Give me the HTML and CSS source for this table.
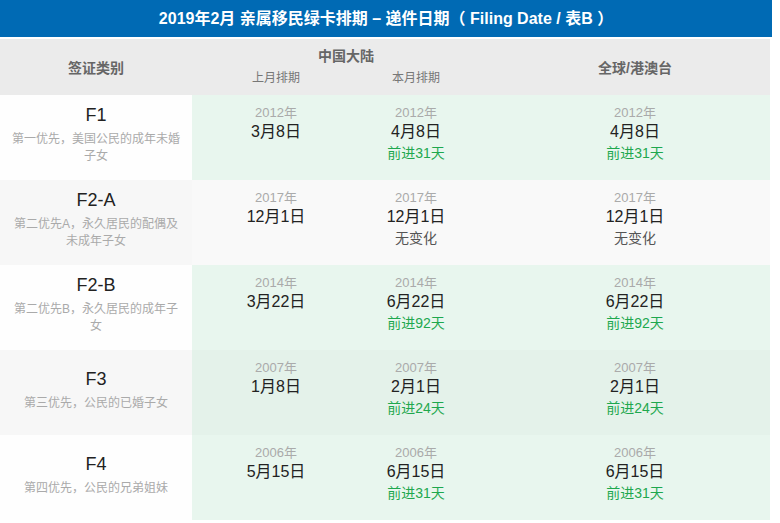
FILE: index.html
```html
<!DOCTYPE html>
<html lang="zh-CN">
<head>
<meta charset="utf-8">
<title>2019年2月 亲属移民绿卡排期</title>
<link rel="stylesheet" href="styles.css">
</head>
<body>
<div class="title">2019年2月 亲属移民绿卡排期 – 递件日期（ Filing Date / 表B ）</div>
<div class="table">
  <div class="head">
    <div class="hcell">签证类别</div>
    <div class="hgroup">
      <div class="gname">中国大陆</div>
      <div class="gsubs"><span>上月排期</span><span>本月排期</span></div>
    </div>
    <div class="hcell">全球/港澳台</div>
  </div>

  <div class="row odd changed">
    <div class="label"><div class="code">F1</div><div class="desc">第一优先，美国公民的成年未婚子女</div></div>
    <div class="cell first"><div class="yr">2012年</div><div class="dt">3月8日</div></div>
    <div class="cell second"><div class="yr">2012年</div><div class="dt">4月8日</div><div class="chg up">前进31天</div></div>
    <div class="cell"><div class="yr">2012年</div><div class="dt">4月8日</div><div class="chg up">前进31天</div></div>
  </div>

  <div class="row even">
    <div class="label"><div class="code">F2-A</div><div class="desc">第二优先A，永久居民的配偶及未成年子女</div></div>
    <div class="cell first"><div class="yr">2017年</div><div class="dt">12月1日</div></div>
    <div class="cell second"><div class="yr">2017年</div><div class="dt">12月1日</div><div class="chg">无变化</div></div>
    <div class="cell"><div class="yr">2017年</div><div class="dt">12月1日</div><div class="chg">无变化</div></div>
  </div>

  <div class="row odd changed">
    <div class="label"><div class="code">F2-B</div><div class="desc">第二优先B，永久居民的成年子女</div></div>
    <div class="cell first"><div class="yr">2014年</div><div class="dt">3月22日</div></div>
    <div class="cell second"><div class="yr">2014年</div><div class="dt">6月22日</div><div class="chg up">前进92天</div></div>
    <div class="cell"><div class="yr">2014年</div><div class="dt">6月22日</div><div class="chg up">前进92天</div></div>
  </div>

  <div class="row even changed">
    <div class="label"><div class="code">F3</div><div class="desc">第三优先，公民的已婚子女</div></div>
    <div class="cell first"><div class="yr">2007年</div><div class="dt">1月8日</div></div>
    <div class="cell second"><div class="yr">2007年</div><div class="dt">2月1日</div><div class="chg up">前进24天</div></div>
    <div class="cell"><div class="yr">2007年</div><div class="dt">2月1日</div><div class="chg up">前进24天</div></div>
  </div>

  <div class="row odd changed">
    <div class="label"><div class="code">F4</div><div class="desc">第四优先，公民的兄弟姐妹</div></div>
    <div class="cell first"><div class="yr">2006年</div><div class="dt">5月15日</div></div>
    <div class="cell second"><div class="yr">2006年</div><div class="dt">6月15日</div><div class="chg up">前进31天</div></div>
    <div class="cell"><div class="yr">2006年</div><div class="dt">6月15日</div><div class="chg up">前进31天</div></div>
  </div>
</div>
</body>
</html>
```
FILE: styles.css
```css
* { box-sizing: border-box; }
body {
  margin: 0;
  background: #ffffff;
  font-family: "Liberation Sans", "Noto Sans CJK SC", sans-serif;
}
.title {
  width: 772px;
  height: 37px;
  background: #006ab4;
  color: #ffffff;
  font-size: 16px;
  font-weight: bold;
  line-height: 37px;
  text-align: center;
  margin-bottom: 2px;
  white-space: pre;
}
.table { width: 770px; }
.head {
  display: grid;
  grid-template-columns: 192px 308px 270px;
  height: 56px;
  background: #ebebeb;
}
.hcell {
  display: flex;
  align-items: center;
  justify-content: center;
  font-size: 14px;
  font-weight: bold;
  color: #666666;
  padding-bottom: 1px;
}
.hgroup {
  padding: 7px 14px 0;
  text-align: center;
}
.gname {
  font-size: 14px;
  font-weight: bold;
  color: #666666;
  line-height: 20px;
}
.gsubs {
  display: grid;
  grid-template-columns: 1fr 1fr;
  margin-top: 3px;
  font-size: 12px;
  color: #777777;
  line-height: 18px;
}
.row {
  display: grid;
  grid-template-columns: 192px 154px 154px 270px;
  height: 85px;
  background: #f9f9f9;
}
.row.changed { background: #e8f6ee; }
.row.even.changed { background: #e4f2ea; }
.label {
  display: flex;
  flex-direction: column;
  justify-content: center;
  align-items: center;
  text-align: center;
  padding: 0 11px 6px;
  background: #fefefe;
}
.row.even .label { background: #f7f7f7; }
.code {
  font-size: 18px;
  line-height: 22px;
  color: #222222;
  margin-bottom: 5px;
}
.desc {
  font-size: 12px;
  line-height: 17px;
  color: #aaaaaa;
}
.cell {
  padding-top: 8px;
  text-align: center;
}
.cell.first { padding-left: 14px; }
.cell.second { padding-right: 14px; }
.yr {
  font-size: 13px;
  line-height: 20px;
  color: #aaaaaa;
}
.dt {
  font-size: 16px;
  line-height: 18px;
  color: #222222;
}
.chg {
  font-size: 14px;
  line-height: 24px;
  color: #555555;
}
.chg.up { color: #1ea84e; }
```
